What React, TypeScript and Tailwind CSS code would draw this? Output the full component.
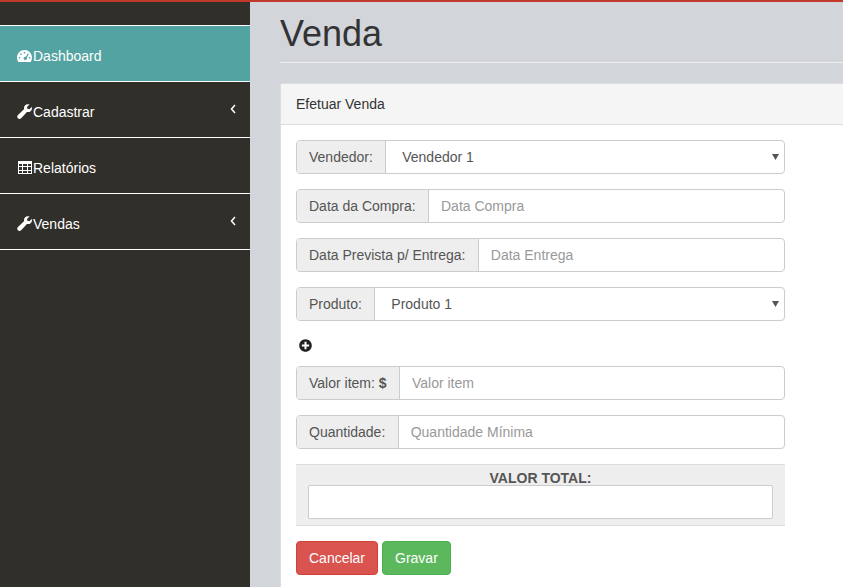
import React from "react";
import {FaPlusCircle} from "react-icons/fa";

const GaugeIcon = () => (
    <svg width="15" height="14" viewBox="0 0 15 14" className="shrink-0 mt-[1px]">
        <path fillRule="evenodd" fill="#ffffff"
              d="M7.500 1C3.300 1 0 4.400 0 8.600c0 1.500.4 2.900 1.200 4.100.1.200.3.300.5.300h11.600c.2 0 .4-.1.500-.3.800-1.200 1.200-2.600 1.200-4.100C15 4.400 11.700 1 7.500 1ZM6.800 3h1.400v1.500H6.800ZM3.400 4.500h1.300v1.400H3.400ZM10.900 4.300l.9.600-2 4c.2.700 0 1.400-.6 1.800-.8.500-1.800.3-2.300-.5s-.3-1.800.5-2.300c.4-.3 1-.3 1.500-.1ZM1.800 8h1.400v1.500H1.800ZM11.800 8h1.400v1.500h-1.400Z"/>
    </svg>
);

const WrenchIcon = () => (
    <svg width="15" height="15" viewBox="0 0 15 15" className="shrink-0">
        <path fill="#ffffff"
              d="M14.700 3c.3.600.3 1.200.2 1.900-.3 1.800-1.900 3.200-3.800 3.200-.4 0-.8-.1-1.200-.2L4.200 14.200c-1 1-2.400 1-3.300.1s-.9-2.300.1-3.300l6.200-5.900C7.100 4.700 7 4.300 7 3.900 7 1.800 8.800.2 10.900.2c.6 0 1.100.1 1.600.3L10 3l.4 1.800 1.900.5Z"/>
    </svg>
);

const TableIcon = () => (
    <svg width="15" height="13" viewBox="0 0 15 13" className="shrink-0" fill="none" stroke="#ffffff" strokeWidth="1" shapeRendering="crispEdges">
        <path d="M1.500 .5H14.500V12.500H1.500Z"/>
        <path d="M1.500 1.500H14.500M1.500 2.500H14.500M1.500 5.500H14.500M1.500 9.500H14.500M5.500 .5V12.500M10.500 .5V12.500"/>
    </svg>
);

const AngleIcon = () => (
    <svg width="6" height="10" viewBox="0 0 6 10" className="shrink-0 -mt-[6px] -mr-[1px]" fill="none" stroke="#ffffff" strokeWidth="1.500">
        <path d="M5 1L1.500 5L5 9"/>
    </svg>
);

const menu = [
    {label: "Dashboard", icon: <GaugeIcon/>, active: true},
    {label: "Cadastrar", icon: <WrenchIcon/>, arrow: true},
    {label: "Relatórios", icon: <TableIcon/>},
    {label: "Vendas", icon: <WrenchIcon/>, arrow: true},
];

const Addon = ({children}: { children: React.ReactNode }) => (
    <span className="flex items-center pl-[12px] pr-[12.400px] bg-[#eeeeee] border-r border-[#cccccc] text-[#555555] whitespace-nowrap">
        {children}
    </span>
);

const TextField = ({label, placeholder}: { label: React.ReactNode; placeholder: string }) => (
    <div className="flex h-[34px] mb-[15px] border border-[#cccccc] rounded-[4px] overflow-hidden bg-white">
        <Addon>{label}</Addon>
        <input placeholder={placeholder}
               className="flex-1 min-w-0 px-[12px] outline-none text-[#555555] placeholder:text-[#999999]"/>
    </div>
);

const SelectField = ({label, value}: { label: string; value: string }) => (
    <div className="flex h-[34px] mb-[15px] border border-[#cccccc] rounded-[4px] overflow-hidden bg-white">
        <Addon>{label}</Addon>
        <div className="relative flex-1 flex items-center pl-[16px] text-[#555555]">
            {value}
            <svg className="absolute right-[5px] top-[13px]" width="7" height="6" viewBox="0 0 7 6">
                <path d="M0 0H7L3.500 6Z" fill="#555555"/>
            </svg>
        </div>
    </div>
);

export default function App() {
    return (
        <div className="h-[587px] w-[843px] overflow-hidden flex flex-col bg-[#d2d5da] text-[14px] leading-[20px] text-[#333333] font-['Liberation_Sans',Arial,sans-serif]">
            <div className="h-[2px] shrink-0 bg-[#c0392b]"></div>
            <div className="flex flex-1 min-h-0">
                <aside className="w-[250px] shrink-0 bg-[#312f2a] pt-[23px]">
                    <div className="border-t border-white">
                        {menu.map((item) => (
                            <div key={item.label}
                                 className={`h-[56px] flex items-center pl-[17px] pr-[15px] pt-[4px] border-b border-white text-white ${item.active ? "bg-[#53a3a3]" : ""}`}>
                                {item.icon}
                                <span className="flex-1 ml-[1px]">{item.label}</span>
                                {item.arrow && <AngleIcon/>}
                            </div>
                        ))}
                    </div>
                </aside>
                <main className="flex-1 min-w-0 pl-[30px]">
                    <h1 className="h-[61px] pt-[12px] border-b border-[#eeeeee] text-[36px] leading-[40px] font-normal text-[#333333]">
                        Venda
                    </h1>
                    <section className="mt-[20px] w-[600px] h-[600px] bg-white border border-[#dddddd] rounded-[4px]">
                        <div className="h-[41px] px-[15px] flex items-center bg-[#f5f5f5] border-b border-[#dddddd]">
                            Efetuar Venda
                        </div>
                        <div className="pt-[15px] pl-[15px] w-[504px]">
                            <SelectField label="Vendedor:" value="Vendedor 1"/>
                            <TextField label="Data da Compra:" placeholder="Data Compra"/>
                            <TextField label="Data Prevista p/ Entrega:" placeholder="Data Entrega"/>
                            <SelectField label="Produto:" value="Produto 1"/>
                            <div className="h-[30px] pt-[3px]">
                                <FaPlusCircle className="w-[13px] h-[13px] ml-[3px] text-[#222222]"/>
                            </div>
                            <TextField label={<>Valor item:&nbsp;<b>$</b></>} placeholder="Valor item"/>
                            <TextField label="Quantidade:" placeholder="Quantidade Mínima"/>
                            <div className="h-[62px] bg-[#eeeeee] border-y border-[#dddddd] text-center px-[12px]">
                                <div className="h-[20px] font-bold text-[#555555] leading-[26px]">VALOR TOTAL:</div>
                                <input className="block w-full h-[34px] bg-white border border-[#cccccc] outline-none rounded-[2px]"/>
                            </div>
                            <div className="flex gap-[4px] mt-[15px]">
                                <button className="h-[34px] px-[12px] text-white bg-[#d9534f] border border-[#d43f3a] rounded-[4px]">Cancelar</button>
                                <button className="h-[34px] px-[12px] text-white bg-[#5cb85c] border border-[#4cae4c] rounded-[4px]">Gravar</button>
                            </div>
                        </div>
                    </section>
                </main>
            </div>
        </div>
    );
}
